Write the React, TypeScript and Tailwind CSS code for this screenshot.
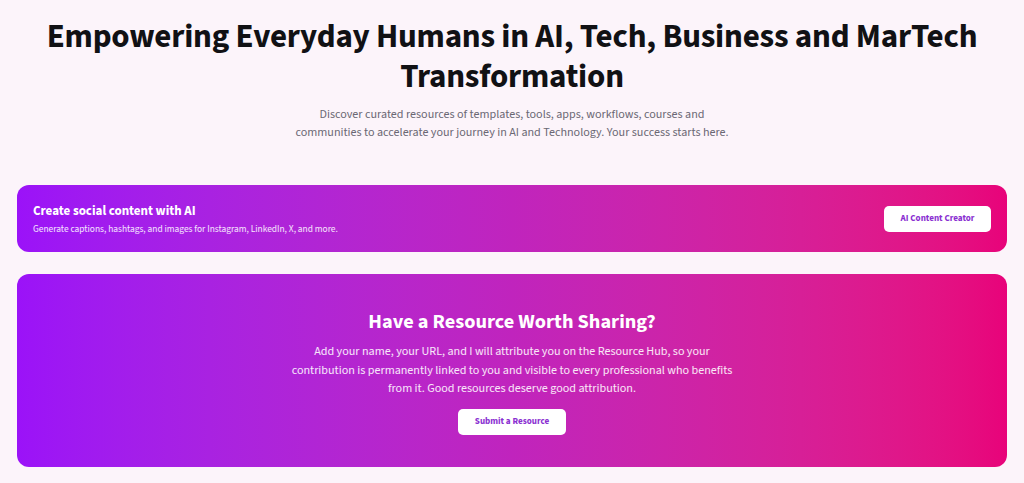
export default function App() {
  return (
    <div className="min-h-[483px] w-full bg-[#fcf4fa] px-[17px] pt-[17px] pb-[16px] font-['Source_Sans_3','Lato','Noto_Sans',sans-serif]">
      <header className="flex flex-col items-center text-center">
        <h1 className="text-[33px] leading-[40px] font-bold tracking-[-0.2px] text-[#111114]">
          Empowering Everyday Humans in AI, Tech, Business and MarTech
          <br />
          Transformation
        </h1>
        <p className="mt-[9px] text-[12.1px] leading-[18px] text-[#6b6874]">
          Discover curated resources of templates, tools, apps, workflows, courses and
          <br />
          communities to accelerate your journey in AI and Technology. Your success starts here.
        </p>
      </header>

      <section className="mt-[43px] flex h-[67px] items-center justify-between rounded-[12px] bg-gradient-to-r from-[#9b12f8] via-[#c024bd] to-[#e8037a] pl-[16px] pr-[16px]">
        <div className="flex flex-col">
          <h2 className="text-[13px] leading-[17px] font-bold text-white">Create social content with AI</h2>
          <p className="mt-[3px] text-[9.4px] leading-[12px] text-white/90">
            Generate captions, hashtags, and images for Instagram, LinkedIn, X, and more.
          </p>
        </div>
        <button className="flex h-[26px] w-[107px] items-center justify-center rounded-[5px] bg-white text-[9.1px] font-bold text-[#8a2fd1]">
          AI Content Creator
        </button>
      </section>

      <section className="mt-[22px] flex h-[193px] flex-col items-center rounded-[12px] bg-gradient-to-r from-[#9b12f8] via-[#c024bd] to-[#e8037a] pt-[35px] text-center">
        <h2 className="text-[20.3px] leading-[25px] font-bold text-white">Have a Resource Worth Sharing?</h2>
        <p className="mt-[9px] text-[12.1px] leading-[18.5px] text-white/90">
          Add your name, your URL, and I will attribute you on the Resource Hub, so your
          <br />
          contribution is permanently linked to you and visible to every professional who benefits
          <br />
          from it. Good resources deserve good attribution.
        </p>
        <button className="mt-[10px] flex h-[26px] w-[108px] items-center justify-center rounded-[5px] bg-white text-[9.1px] font-bold text-[#8a2fd1]">
          Submit a Resource
        </button>
      </section>
    </div>
  )
}
